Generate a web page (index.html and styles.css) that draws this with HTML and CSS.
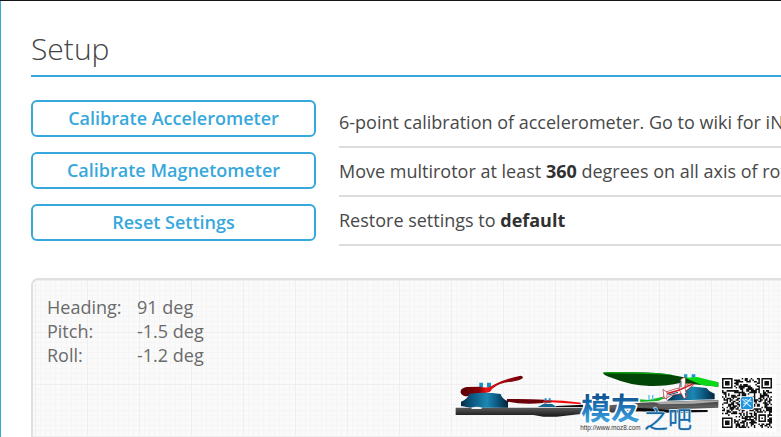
FILE: index.html
```html
<!DOCTYPE html>
<html lang="en">
<head>
    <meta charset="UTF-8">
    <meta name="viewport" content="width=device-width, initial-scale=1.0">
    <title>Setup</title>
    <link rel="stylesheet" href="styles.css">
</head>
<body>
    <main class="tab-setup">
        <h1 class="tab-title">Setup</h1>

        <div class="calibration">
            <div class="buttons">
                <button type="button" class="default-btn">Calibrate Accelerometer</button>
                <button type="button" class="default-btn">Calibrate Magnetometer</button>
                <button type="button" class="default-btn">Reset Settings</button>
            </div>
            <div class="notes">
                <p>6-point calibration of accelerometer. Go to wiki for iNav</p>
                <p>Move multirotor at least <b>360</b> degrees on all axis of rotation</p>
                <p>Restore settings to <b>default</b></p>
            </div>
        </div>

        <section class="model-view">
            <!-- Grid, 3D model and watermark -->
            <svg class="model-canvas" width="100%" height="100%" aria-hidden="true">
                <defs>
                    <pattern id="grid" x="2" width="52" height="52" patternUnits="userSpaceOnUse">
                        <path d="M5.5 0V52M10.5 0V52M15.5 0V52M20.5 0V52M26.5 0V52M31.5 0V52M36.5 0V52M41.5 0V52M46.5 0V52M0 5.5H52M0 10.5H52M0 15.5H52M0 20.5H52M0 26.5H52M0 31.5H52M0 36.5H52M0 41.5H52M0 46.5H52" stroke="#f5f5f5"/>
                        <path d="M.5 0V52M0 .5H52" stroke="#efefef"/>
                    </pattern>
                    <linearGradient id="motor" x1="0" x2="1">
                        <stop offset="0" stop-color="#052b43"/>
                        <stop offset=".2" stop-color="#0a5279"/>
                        <stop offset=".55" stop-color="#1c87b4"/>
                        <stop offset=".8" stop-color="#0a5279"/>
                        <stop offset="1" stop-color="#042338"/>
                    </linearGradient>
                    <linearGradient id="arm" x1="0" x2="0" y1="0" y2="1">
                        <stop offset="0" stop-color="#3a3a3a"/>
                        <stop offset=".4" stop-color="#606060"/>
                        <stop offset="1" stop-color="#181818"/>
                    </linearGradient>
                    <linearGradient id="rotor" x1="0" x2="1">
                        <stop offset="0" stop-color="#550005"/>
                        <stop offset=".3" stop-color="#8a0008"/>
                        <stop offset=".42" stop-color="#f01515"/>
                        <stop offset=".6" stop-color="#b00810"/>
                        <stop offset="1" stop-color="#6c0008"/>
                    </linearGradient>
                    <linearGradient id="ink" x1="0" x2="0" y1="0" y2="1">
                        <stop offset="0" stop-color="#0c3c70"/>
                        <stop offset=".5" stop-color="#1d72b5"/>
                        <stop offset="1" stop-color="#4db4ec"/>
                    </linearGradient>
                </defs>
                <rect width="100%" height="100%" fill="url(#grid)"/>

                <g transform="translate(407 80) scale(.3333)">
                    <!-- frame -->
                    <path d="M47 143H420L600 128L760 122L835 120V143L650 150L560 156L430 161L350 170H310L280 165H47Z" fill="url(#arm)"/>
                    <path d="M348 138L430 134V141H348ZM560 142L700 150L803 150V156L690 158L560 152Z" fill="#0c0c0c"/>
                    <path d="M90 141H128L124 147H96Z" fill="#eee"/>
                    <path d="M640 126L760 123L835 121V125L760 131L660 133Z" fill="#aaa"/>
                    <!-- left motor -->
                    <path d="M118 68H129V82H118ZM141 68H153V82H141Z" fill="#168fc5"/>
                    <path d="M62 98Q60 84 80 81L120 80Q145 87 166 72Q196 57 242 47Q250 48 248 55Q240 62 215 65Q176 68 155 88Q154 97 136 99Q108 99 87 109Q66 110 62 98Z" fill="url(#rotor)"/>
                    <path d="M63 125Q84 117 88 101Q136 95 182 102Q186 118 204 124V143H128Q110 138 92 143L63 138Z" fill="url(#motor)"/>
                    <!-- rear red rotor -->
                    <path d="M201 117Q260 116 315 119L310 129Q250 135 201 125Z" fill="#6c0008"/>
                    <path d="M313 120Q370 120 425 128V133L335 127L313 131Z" fill="#f00b0b"/>
                    <path d="M293 141L310 132H336L350 141Z" fill="#116890"/>
                    <path d="M314 115H320V130H314ZM326 115H332V130H326Z" fill="#1d8fc5"/>
                    <path d="M309 122H336V127H309Z" fill="#bb101a"/>
                    <!-- right motor -->
                    <path d="M705 96Q737 75 763 80L800 84Q807 95 824 101V118L680 122Q700 108 705 96Z" fill="url(#motor)"/>
                    <path d="M732 43H742V53H732ZM755 43H766V53H755Z" fill="#119bd0"/>
                    <!-- green rotors -->
                    <path d="M489 38Q500 34 580 37Q660 37 700 46L740 53L835 67V80L785 75L720 69Q680 79 630 78Q570 76 515 53Q490 46 489 38Z" fill="#024607"/>
                    <path d="M489 38Q500 34 580 37Q650 37 700 45Q600 41 489 40Z" fill="#0aa80f"/>
                    <path d="M735 53L772 51L835 67V80L785 75Z" fill="#08d817"/>
                    <path d="M590 117L625 120L665 111L678 113L654 123L600 126Z" fill="#14ba25"/>
                    <path d="M625 105H629V120H625ZM636 105H640V120H636Z" fill="#59c5e6"/>

                    <!-- little plane of the watermark -->
                    <g stroke="#a02028" stroke-width="2">
                        <path d="M668 114L678 96L705 87L723 83L750 70L762 73L745 87L728 100L695 106L676 115Z" fill="#fff"/>
                        <path d="M722 59Q733 48 737 56L735 84L741 111L732 116L717 88Z" fill="#fff"/>
                        <path d="M669 88L682 98L680 118L672 111Z" fill="#fff"/>
                    </g>
                    <path d="M682 101L716 91L758 72" fill="none" stroke="#d32626" stroke-width="5"/>
                    <path d="M723 62V82M736 99L738 112M685 105L714 97" fill="none" stroke="#1c4778" stroke-width="3"/>

                    <!-- watermark -->
                    <g class="mark">
                        <text x="424" y="178" font-size="88" class="mark-bold">模友</text>
                        <text x="612" y="204" font-size="72" class="mark-thin">之吧</text>
                        <text x="421" y="210" font-size="19" class="mark-url">http://www.moz8.com</text>
                    </g>
                </g>

                <!-- QR code, filled in by script -->
                <rect x="686" y="94" width="57" height="58" fill="#fff"/>
                <svg x="689" y="98" width="50" height="50" viewBox="0 0 33 33">
                    <path id="qr"/>
                    <rect x="12" y="12" width="9" height="9" rx="1" fill="#fff"/>
                    <rect x="12.5" y="12.5" width="8" height="8" rx="1" fill="#2294dc"/>
                    <path d="M13.500 14L19 19M19 13.500L14 19M15 14L19.500 15.500M14 16.500L16 17" stroke="#d5efff" stroke-width=".7"/>
                </svg>
            </svg>

            <dl class="attitude">
                <dt>Heading:</dt><dd>91 deg</dd>
                <dt>Pitch:</dt><dd>-1.5 deg</dd>
                <dt>Roll:</dt><dd>-1.2 deg</dd>
            </dl>
        </section>
    </main>
    <script src="qr.js"></script>
</body>
</html>
```
FILE: styles.css
```css
* {
    box-sizing: border-box;
}

body {
    margin: 0;
    min-height: 100vh;
    display: flex;
    border-top: 1px solid #141414;
    background-color: #fff;
    color: #303030;
    font-family: 'Open Sans', 'Noto Sans CJK SC', sans-serif;
    font-size: 18px;
    line-height: 24px;
    overflow: hidden;
}

.tab-setup {
    flex: 1;
    min-width: 0;
    display: flex;
    flex-direction: column;
    padding: 28px 0 0 30px;
    border-left: 1px solid #37a8db;
}

.tab-title {
    margin: 0 0 22px;
    padding-bottom: 6px;
    border-bottom: 2px solid #37a8db;
    color: #444;
    font-size: 30px;
    font-weight: 300;
    line-height: 40px;
}

.calibration {
    display: grid;
    grid-template-columns: 285px 1fr;
    column-gap: 23px;
    margin-bottom: 32px;
}

.buttons {
    display: flex;
    flex-direction: column;
    gap: 15px;
    padding-top: 1px;
}

.default-btn {
    height: 37px;
    padding: 0 0 1px;
    border: 2px solid #37a8db;
    border-radius: 6px;
    background-color: #fff;
    color: #37a8db;
    font-family: inherit;
    font-size: 18px;
    font-weight: 600;
    line-height: 24px;
    cursor: pointer;
}

.default-btn:hover {
    background-color: #37a8db;
    color: #fff;
}

.notes {
    min-width: 0;
}

.notes p {
    margin: 0;
    padding: 11px 0 12px;
    border-bottom: 2px solid #ddd;
    color: #484848;
    white-space: nowrap;
    overflow: hidden;
}

.notes b {
    color: #303030;
    font-weight: 700;
}

.model-view {
    position: relative;
    flex: 1;
    min-height: 158px;
    border: 2px solid #e0e0e0;
    border-width: 2px 0 0 2px;
    border-radius: 7px 0 0 0;
    background-color: #fafafa;
    overflow: hidden;
}

/* Drawn behind the attitude readout */
.model-canvas {
    position: absolute;
    inset: 0;
}

.attitude {
    position: relative;
    display: grid;
    grid-template-columns: 90px 1fr;
    margin: 0;
    padding: 15px 14px;
    color: #6a6a6a;
}

.attitude dd {
    margin: 0;
}

.mark {
    paint-order: stroke;
    stroke-linejoin: round;
    font-family: 'Noto Sans CJK SC', sans-serif;
}

.mark-bold {
    fill: url(#ink);
    stroke: #fff;
    stroke-width: 10px;
    font-weight: 700;
}

.mark-thin {
    fill: #1769a6;
    stroke: #d8edfa;
    stroke-width: 4px;
    font-weight: 400;
}

.mark-url {
    fill: #333;
    font-family: 'Liberation Sans', sans-serif;
}

#qr {
    fill: #111;
}
```
FILE: qr.js
```js
// Fill the QR code: three finder squares, one alignment square, data modules
const SIZE = 33;
let seed = 77;
let d = '';

function nextBit() {
    seed = (seed * 1103515245 + 12345) % 2147483648;
    return seed / 2147483648 < 0.52;
}

function ring(x, y, left, top, size) {
    const dx = x - left;
    const dy = y - top;
    if (dx < -1 || dy < -1 || dx > size || dy > size) return null;
    const dist = Math.max(Math.abs(dx - (size - 1) / 2), Math.abs(dy - (size - 1) / 2));
    return size === 7 ? dist !== 2 && dist !== 4 : dist !== 1 && dist !== 3;
}

for (let y = 0; y < SIZE; y++) {
    for (let x = 0; x < SIZE; x++) {
        const dark = ring(x, y, 0, 0, 7) ?? ring(x, y, 26, 0, 7) ?? ring(x, y, 0, 26, 7) ?? ring(x, y, 24, 24, 5) ?? nextBit();
        if (dark) d += `M${x} ${y}h1v1h-1z`;
    }
}

document.getElementById('qr').setAttribute('d', d);
```
